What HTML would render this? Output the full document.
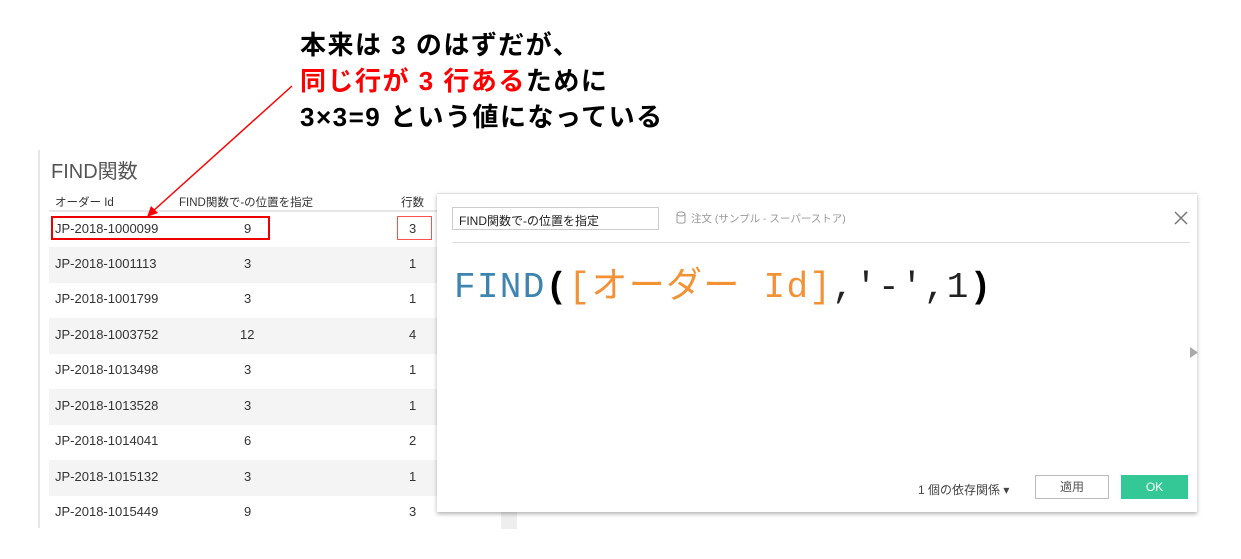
<!DOCTYPE html>
<html><head><meta charset="utf-8"><style>
*{margin:0;padding:0;box-sizing:border-box}
body{width:1241px;height:559px;background:#fff;position:relative;overflow:hidden;font-family:"Liberation Sans","Noto Sans CJK JP",sans-serif;color:#333}
.a{position:absolute;white-space:nowrap}
.note{font-size:26px;font-weight:bold;color:#000;left:300px;line-height:36px;letter-spacing:1.5px}
.row{position:absolute;left:49px;width:388px;height:35.5px;font-size:13px;color:#333}
.row.g{background:#f4f4f4}
.row span{position:absolute;top:9px}
</style></head><body>
<div class="a note" style="top:27px">本来は 3 のはずだが、</div>
<div class="a note" style="top:63px"><span style="color:#f00">同じ行が 3 行ある</span>ために</div>
<div class="a note" style="top:99px">3×3=9 という値になっている</div>

<div class="a" style="left:38px;top:150px;width:2px;height:378px;background:#e6e6e6"></div>
<div class="a" style="left:51px;top:155px;font-size:20px;color:#555">FIND関数</div>
<div class="a" style="left:55px;top:194px;font-size:11.5px;color:#333">オーダー Id</div>
<div class="a" style="left:179px;top:194px;font-size:11.5px;color:#333">FIND関数で-の位置を指定</div>
<div class="a" style="left:401px;top:194px;font-size:11.5px;color:#333">行数</div>
<div class="a" style="left:49px;top:210px;width:388px;height:2px;background:#e6e6e6"></div>

<div class="row" style="top:212px"><span style="left:6px">JP-2018-1000099</span><span style="left:195px">9</span><span style="left:360px">3</span></div>
<div class="row g" style="top:247px"><span style="left:6px">JP-2018-1001113</span><span style="left:195px">3</span><span style="left:360px">1</span></div>
<div class="row" style="top:282px"><span style="left:6px">JP-2018-1001799</span><span style="left:195px">3</span><span style="left:360px">1</span></div>
<div class="row g" style="top:318px"><span style="left:6px">JP-2018-1003752</span><span style="left:191px">12</span><span style="left:360px">4</span></div>
<div class="row" style="top:353px"><span style="left:6px">JP-2018-1013498</span><span style="left:195px">3</span><span style="left:360px">1</span></div>
<div class="row g" style="top:389px"><span style="left:6px">JP-2018-1013528</span><span style="left:195px">3</span><span style="left:360px">1</span></div>
<div class="row" style="top:424px"><span style="left:6px">JP-2018-1014041</span><span style="left:195px">6</span><span style="left:360px">2</span></div>
<div class="row g" style="top:460px"><span style="left:6px">JP-2018-1015132</span><span style="left:195px">3</span><span style="left:360px">1</span></div>
<div class="row" style="top:495px"><span style="left:6px">JP-2018-1015449</span><span style="left:195px">9</span><span style="left:360px">3</span></div>

<div class="a" style="left:51px;top:216px;width:219px;height:24px;border:2px solid #e00"></div>
<div class="a" style="left:397px;top:216px;width:35px;height:24px;border:1px solid #ff5050"></div>
<div class="a" style="left:501px;top:512px;width:16px;height:17px;background:#eee"></div>

<div class="a" style="left:437px;top:193px;width:760px;height:319px;background:#fff;border-top:1px solid #ddd;box-shadow:0 2px 4px rgba(0,0,0,.3)"></div>
<div class="a" style="left:452px;top:207px;width:207px;height:23px;border:1px solid #ccc;font-size:12px;color:#222;padding:4px 0 0 6px">FIND関数で-の位置を指定</div>
<svg class="a" style="left:675px;top:211px" width="12" height="14"><ellipse cx="6" cy="3" rx="4" ry="2" fill="none" stroke="#999"/><path d="M2 3v8c0 1.5 8 1.5 8 0V3" fill="none" stroke="#999"/></svg>
<div class="a" style="left:691px;top:211px;font-size:10.5px;color:#999">注文 (サンプル - スーパーストア)</div>
<svg class="a" style="left:1174px;top:211px" width="14" height="14"><path d="M1 1L13 13M13 1L1 13" stroke="#777" stroke-width="1.5"/></svg>
<div class="a" style="left:452px;top:242px;width:738px;height:1px;background:#ddd"></div>
<div class="a" style="left:454px;top:266px;font-family:'Liberation Mono','Noto Sans CJK JP',monospace;font-size:36px;line-height:44px;letter-spacing:1.3px"><span style="color:#3d85b0">FIND</span><span style="color:#000;font-weight:bold">(</span><span style="color:#f39234">[オーダー Id]</span><span style="color:#222">,'-',1</span><span style="color:#000;font-weight:bold">)</span></div>
<svg class="a" style="left:1190px;top:347px" width="8" height="11"><path d="M0 0L8 5.5L0 11Z" fill="#aaa"/></svg>
<div class="a" style="left:918px;top:481px;font-size:12px;color:#444">1 個の依存関係 ▾</div>
<div class="a" style="left:1035px;top:475px;width:74px;height:24px;border:1px solid #bbb;font-size:12px;color:#555;text-align:center;line-height:22px">適用</div>
<div class="a" style="left:1121px;top:475px;width:67px;height:24px;background:#33c896;font-size:12px;color:#fff;text-align:center;line-height:24px">OK</div>

<svg class="a" style="left:0;top:0" width="1241" height="559"><line x1="292" y1="86" x2="152" y2="212" stroke="#f00" stroke-width="1.5"/><path d="M147 217L151 206L158 213Z" fill="#f00"/></svg>
</body></html>
